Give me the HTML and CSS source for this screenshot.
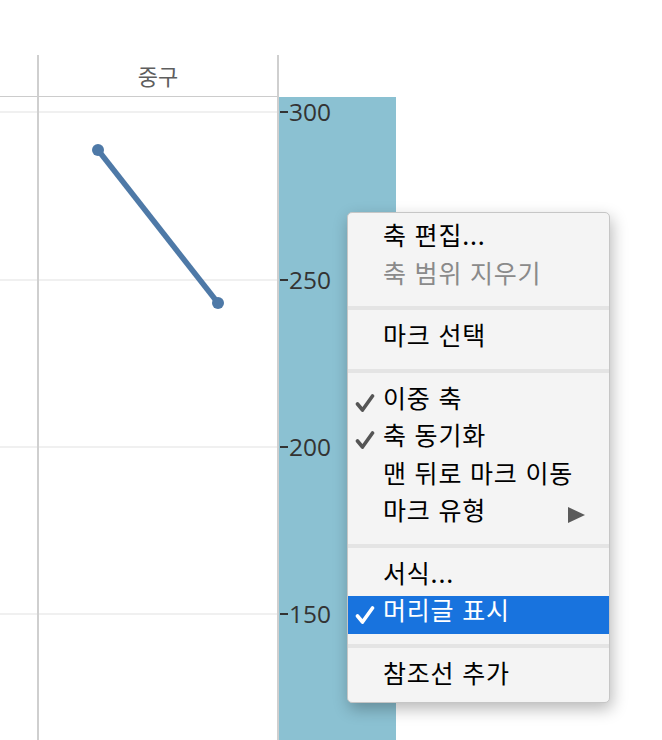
FILE: index.html
```html
<!DOCTYPE html>
<html lang="ko">
<head>
<meta charset="utf-8">
<link rel="stylesheet" href="styles.css">
</head>
<body>
<div class="sheet">
  <div class="top-space"></div>
  <div class="hdr hdr-left"></div>
  <div class="hdr hdr-main">중구</div>
  <div class="hdr hdr-axis"></div>
  <div class="hdr hdr-rest"></div>

  <div class="pane pane-left">
    <svg class="plot" width="37" height="643" viewBox="0 0 37 643">
      <g class="grid">
        <line x1="0" y1="15" x2="37" y2="15"/>
        <line x1="0" y1="183" x2="37" y2="183"/>
        <line x1="0" y1="350" x2="37" y2="350"/>
        <line x1="0" y1="517" x2="37" y2="517"/>
      </g>
    </svg>
  </div>
  <div class="pane pane-main">
    <svg class="plot" width="238" height="643" viewBox="0 0 238 643">
      <g class="grid">
        <line x1="0" y1="15" x2="238" y2="15"/>
        <line x1="0" y1="183" x2="238" y2="183"/>
        <line x1="0" y1="350" x2="238" y2="350"/>
        <line x1="0" y1="517" x2="238" y2="517"/>
      </g>
      <line class="series" x1="59" y1="53" x2="179" y2="206"/>
      <circle class="dot" cx="59" cy="53" r="6"/>
      <circle class="dot" cx="179" cy="206" r="6"/>
    </svg>
  </div>
  <div class="axis">
    <div class="tick" style="top:15px"><span class="tick-mark"></span><span class="tick-label">300</span></div>
    <div class="tick" style="top:183px"><span class="tick-mark"></span><span class="tick-label">250</span></div>
    <div class="tick" style="top:350px"><span class="tick-mark"></span><span class="tick-label">200</span></div>
    <div class="tick" style="top:517px"><span class="tick-mark"></span><span class="tick-label">150</span></div>
  </div>
  <div class="pane-rest"></div>
</div>

<div class="menu">
  <div class="item">축 편집...</div>
  <div class="item disabled">축 범위 지우기</div>
  <div class="sep"></div>
  <div class="item">마크 선택</div>
  <div class="sep"></div>
  <div class="item checked"><svg class="check" viewBox="0 0 20 20" width="20" height="20"><path d="M2.5 11 L7.5 17 L17.5 3"/></svg>이중 축</div>
  <div class="item checked"><svg class="check" viewBox="0 0 20 20" width="20" height="20"><path d="M2.5 11 L7.5 17 L17.5 3"/></svg>축 동기화</div>
  <div class="item">맨 뒤로 마크 이동</div>
  <div class="item submenu">마크 유형<svg class="arrow" viewBox="0 0 17 16" width="17" height="16"><path d="M0 0 L17 8 L0 16 Z"/></svg></div>
  <div class="sep"></div>
  <div class="item">서식...</div>
  <div class="item checked active"><svg class="check" viewBox="0 0 20 20" width="20" height="20"><path d="M2.5 11 L7.5 17 L17.5 3"/></svg>머리글 표시</div>
  <div class="sep"></div>
  <div class="item">참조선 추가</div>
</div>
</body>
</html>
```

FILE: styles.css
```css
html, body {
  margin: 0;
  padding: 0;
  background: #ffffff;
  overflow: hidden;
}

body {
  width: 662px;
  height: 740px;
  position: relative;
  font-family: "Noto Sans CJK KR", "Noto Sans", sans-serif;
}

.sheet {
  display: grid;
  grid-template-columns: 37px 242px 117px 1fr;
  grid-template-rows: 55px 42px 643px;
  height: 740px;
}

.top-space {
  grid-column: 1 / -1;
}

.hdr {
  box-sizing: border-box;
}

.hdr-left {
  border-bottom: 1px solid #cccccc;
}

.hdr-main {
  border-left: 2px solid #cfcfcf;
  border-right: 2px solid #cfcfcf;
  border-bottom: 1px solid #cccccc;
  display: flex;
  align-items: center;
  justify-content: center;
  font-size: 22px;
  color: #5e5e5e;
  padding-bottom: 1px;
}

.pane {
  overflow: hidden;
}

.pane-main {
  border-left: 2px solid #cfcfcf;
  border-right: 2px solid #cfcfcf;
}

.plot {
  display: block;
}

.grid line {
  stroke: #f0f0f0;
  stroke-width: 2;
}

.series {
  stroke: #4e79a7;
  stroke-width: 5.5;
}

.dot {
  fill: #4e79a7;
}

.axis {
  background: #8bc1d2;
  position: relative;
}

.tick {
  position: absolute;
  left: 1px;
  top: 0;
  height: 30px;
  margin-top: -15px;
  display: flex;
  align-items: center;
}

.tick-mark {
  width: 8px;
  height: 2px;
  background: #333333;
}

.tick-label {
  font-family: "Open Sans", "Liberation Sans", sans-serif;
  font-size: 24.5px;
  line-height: 30px;
  color: #333333;
  margin-left: 1px;
}

.menu {
  position: absolute;
  left: 347px;
  top: 212px;
  width: 263px;
  box-sizing: border-box;
  background: #f4f4f4;
  border: 1px solid #c6c6c6;
  border-radius: 5px;
  padding: 8px 0 6px;
  box-shadow: 2px 6px 16px rgba(0, 0, 0, 0.28);
}

.item {
  position: relative;
  box-sizing: border-box;
  height: 37.5px;
  padding-left: 35px;
  font-size: 25px;
  font-weight: 400;
  letter-spacing: 0.8px;
  line-height: 27px;
  color: #000000;
  white-space: nowrap;
}

.item.disabled {
  color: #8a8a8a;
}

.item.active {
  background: #1873de;
  color: #ffffff;
}

.check {
  position: absolute;
  left: 7px;
  top: 9px;
  fill: none;
  stroke: #555555;
  stroke-width: 3.6;
  stroke-linecap: round;
  stroke-linejoin: round;
}

.item.active .check {
  stroke: #ffffff;
}

.arrow {
  position: absolute;
  right: 24px;
  top: 11px;
  fill: #5a5a5a;
}

.sep {
  height: 4px;
  background: #e4e4e4;
  margin: 10px 0 11px;
}
```
